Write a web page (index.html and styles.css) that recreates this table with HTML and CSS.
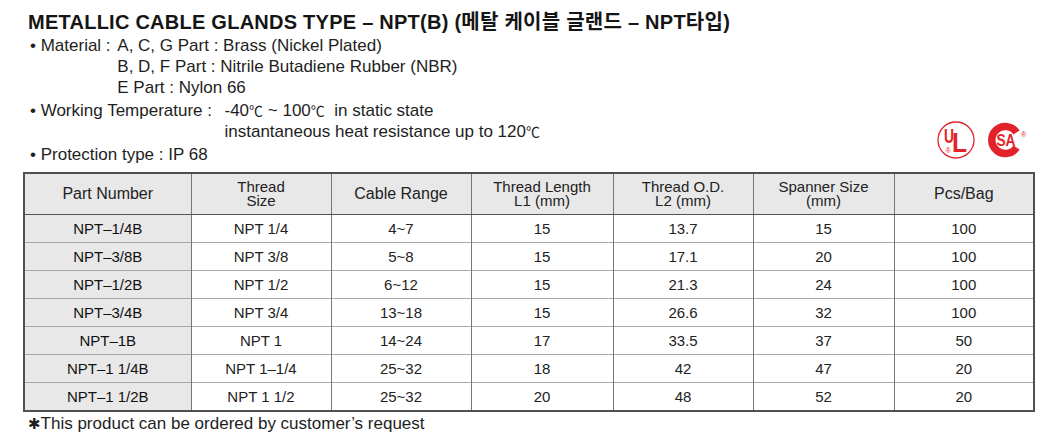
FILE: index.html
```html
<!DOCTYPE html>
<html lang="en">
<head>
<meta charset="utf-8">
<title>Metallic Cable Glands Type - NPT(B)</title>
<link rel="stylesheet" href="styles.css">
</head>
<body>
<div class="page">
  <h1 class="title">METALLIC CABLE GLANDS TYPE – NPT(B) (메탈 케이블 글랜드 – NPT타입)</h1>
  <div class="intro">
    <div class="specs">
      <div class="spec">
        <span class="label">•&nbsp;Material :&nbsp;</span>
        <div class="values">
          <div>A, C, G Part : Brass (Nickel Plated)</div>
          <div>B, D, F Part : Nitrile Butadiene Rubber (NBR)</div>
          <div>E Part : Nylon 66</div>
        </div>
      </div>
      <div class="spec gap">
        <span class="label wide">•&nbsp;Working Temperature :&nbsp;&nbsp;</span>
        <div class="values">
          <div>-40<span class="deg">℃</span> ~ 100<span class="deg">℃</span>&nbsp;&nbsp;in static state</div>
          <div>instantaneous heat resistance up to 120<span class="deg">℃</span></div>
        </div>
      </div>
      <div class="spec gap">
        <span class="label">•&nbsp;Protection type : IP 68</span>
      </div>
    </div>
    <div class="logos">
      <svg class="ul" width="38" height="38" viewBox="0 0 38 38" aria-label="UL">
        <circle cx="19" cy="19" r="18" fill="#fff" stroke="#e3232b" stroke-width="1.3"/>
        <text x="7" y="22" font-family="Liberation Sans, Arial, sans-serif" font-weight="bold" font-size="20" fill="#e3232b" textLength="10" lengthAdjust="spacingAndGlyphs">U</text>
        <text x="15" y="31" font-family="Liberation Sans, Arial, sans-serif" font-weight="bold" font-size="28" fill="#e3232b" textLength="15" lengthAdjust="spacingAndGlyphs">L</text>
        <text x="8.5" y="32" font-family="Liberation Sans, Arial, sans-serif" font-size="7" fill="#e3232b">®</text>
      </svg>
      <svg class="csa" width="40" height="36" viewBox="0 0 40 36" aria-label="CSA">
        <path d="M28.5 10.5 A13.5 13.5 0 1 0 28.5 25.5" fill="none" stroke="#e3232b" stroke-width="7.5"/>
        <text x="8.5" y="24" font-family="Liberation Sans, Arial, sans-serif" font-weight="bold" font-size="17" fill="#e3232b" textLength="19" lengthAdjust="spacingAndGlyphs">SA</text>
        <text x="33" y="15" font-family="Liberation Sans, Arial, sans-serif" font-size="7" fill="#e3232b">®</text>
      </svg>
    </div>
  </div>
  <table class="spec-table">
    <colgroup>
      <col class="c1"><col class="c2"><col class="c3"><col class="c4"><col class="c5"><col class="c6"><col class="c7">
    </colgroup>
    <thead>
      <tr>
        <th class="one">Part Number</th>
        <th class="two">Thread<br>Size</th>
        <th class="one">Cable Range</th>
        <th class="two">Thread Length<br>L1 (mm)</th>
        <th class="two">Thread O.D.<br>L2 (mm)</th>
        <th class="two">Spanner Size<br>(mm)</th>
        <th class="one">Pcs/Bag</th>
      </tr>
    </thead>
    <tbody>
      <tr><td class="part">NPT–1/4B</td><td>NPT 1/4</td><td>4~7</td><td>15</td><td>13.7</td><td>15</td><td>100</td></tr>
      <tr><td class="part">NPT–3/8B</td><td>NPT 3/8</td><td>5~8</td><td>15</td><td>17.1</td><td>20</td><td>100</td></tr>
      <tr><td class="part">NPT–1/2B</td><td>NPT 1/2</td><td>6~12</td><td>15</td><td>21.3</td><td>24</td><td>100</td></tr>
      <tr><td class="part">NPT–3/4B</td><td>NPT 3/4</td><td>13~18</td><td>15</td><td>26.6</td><td>32</td><td>100</td></tr>
      <tr><td class="part">NPT–1B</td><td>NPT 1</td><td>14~24</td><td>17</td><td>33.5</td><td>37</td><td>50</td></tr>
      <tr><td class="part">NPT–1 1/4B</td><td>NPT 1–1/4</td><td>25~32</td><td>18</td><td>42</td><td>47</td><td>20</td></tr>
      <tr><td class="part">NPT–1 1/2B</td><td>NPT 1 1/2</td><td>25~32</td><td>20</td><td>48</td><td>52</td><td>20</td></tr>
    </tbody>
  </table>
  <p class="note"><span class="star">✱</span>This product can be ordered by customer’s request</p>
</div>
</body>
</html>
```

FILE: styles.css
```css
html, body {
  margin: 0;
  padding: 0;
  background: #fff;
}

body {
  font-family: "Liberation Sans", Arial, "Noto Sans CJK KR", sans-serif;
  color: #1e1e1e;
}

.page {
  width: 1052px;
  height: 438px;
  padding: 9px 0 0 0;
  box-sizing: border-box;
  overflow: hidden;
}

.title {
  margin: 0 0 0 28px;
  font-size: 20px;
  line-height: 26px;
  font-weight: bold;
  letter-spacing: 0.25px;
  color: #151515;
  font-family: "Liberation Sans", Arial, "Noto Sans CJK KR", sans-serif;
}

.intro {
  display: flex;
  justify-content: space-between;
}

.specs {
  padding-left: 30px;
  font-size: 17px;
  line-height: 21px;
}

.spec {
  display: flex;
  align-items: flex-start;
  white-space: nowrap;
}

.spec.gap {
  margin-top: 2px;
}

.label {
  padding-right: 2px;
}

.label.wide {
  padding-right: 3px;
}

.deg {
  font-family: "Noto Sans CJK KR", sans-serif;
  font-size: 14px;
}

.logos {
  display: flex;
  align-items: center;
  gap: 13px;
  align-self: flex-end;
  margin: 0 24px 6px 0;
}

.logos svg {
  display: block;
}

.spec-table {
  margin: 7px 0 0 23px;
  width: 1010px;
  border-collapse: collapse;
  table-layout: fixed;
  border: 2px solid #505050;
  font-size: 15px;
  color: #222;
}

.c1 { width: 167px; }
.c2 { width: 140px; }
.c3 { width: 140px; }
.c4 { width: 142px; }
.c5 { width: 140px; }
.c6 { width: 141px; }
.c7 { width: 140px; }

.spec-table th {
  background: #e8e8e8;
  font-weight: normal;
  height: 40px;
  padding: 0;
  text-align: center;
  border-left: 1px solid #777;
  border-bottom: 1px solid #555;
}

.spec-table th.one {
  font-size: 16px;
}

.spec-table th.two {
  font-size: 15px;
  line-height: 14px;
}

.spec-table td {
  height: 27px;
  padding: 0;
  text-align: center;
  border-left: 1px solid #777;
  border-top: 1px solid #a8a8a8;
}

.spec-table td.part {
  background: #e8e8e8;
  color: #111;
}

.note {
  margin: 1px 0 0 28px;
  font-size: 17px;
  line-height: 22px;
  color: #1e1e1e;
}

.star {
  font-family: "DejaVu Sans", sans-serif;
  font-size: 15px;
}
```
